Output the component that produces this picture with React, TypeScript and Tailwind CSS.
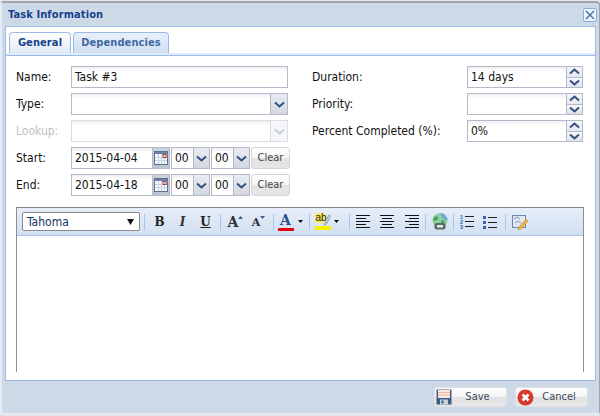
import type { ReactNode } from 'react';

const fieldBorder = 'border border-[#b5b8c8]';
const inputBg = 'bg-[linear-gradient(#f0f0f2,#ffffff_5px)]';
const btnBg = 'bg-[linear-gradient(#ffffff_0%,#f4f4f4_50%,#e2e2e2_50%,#e6e6e6_100%)]';

function Chevron({ up = false, muted = false }: { up?: boolean; muted?: boolean }) {
  return (
    <svg width="11" height="7" viewBox="0 0 11 7" className={up ? 'rotate-180' : ''}>
      <path d="M1 1.5 L5.5 5.5 L10 1.5" fill="none" stroke={muted ? '#c3cddc' : '#2f4f80'} strokeWidth="2" />
    </svg>
  );
}

function Input({ value = '', w, disabled = false, className = '' }: { value?: string; w: string; disabled?: boolean; className?: string }) {
  return (
    <div className={`${w} h-[22px] ${fieldBorder} ${inputBg} pl-[3px] flex items-center text-[12px] text-[#111] shrink-0 ${disabled ? 'border-[#dcdee6]' : ''} ${className}`}>
      {value}
    </div>
  );
}

function Arrow({ disabled = false, w = 'w-[17px]' }: { disabled?: boolean; w?: string }) {
  return (
    <div className={`${w} h-[22px] border-y border-r ${disabled ? 'border-[#dcdee6] bg-[#f5f6f8]' : 'border-[#b5b8c8] bg-[linear-gradient(#e8ecf3,#d3d8e0)]'} flex items-center justify-center shrink-0`}>
      <Chevron muted={disabled} />
    </div>
  );
}

function Combo({ w, value = '', disabled = false, arrowW }: { w: string; value?: string; disabled?: boolean; arrowW?: string }) {
  return (
    <div className="flex">
      <Input w={w} value={value} disabled={disabled} />
      <Arrow disabled={disabled} w={arrowW} />
    </div>
  );
}

function Spinner({ value = '' }: { value?: string }) {
  return (
    <div className="flex">
      <Input w="w-[100px]" value={value} />
      <div className="w-[16px] h-[22px] border-y border-r border-[#b5b8c8] flex flex-col shrink-0">
        <div className="flex-1 flex items-center justify-center bg-[linear-gradient(#f6f7fa,#e4e8ef)] border-b border-[#b5b8c8]"><Chevron up /></div>
        <div className="flex-1 flex items-center justify-center bg-[linear-gradient(#f6f7fa,#dfe3ea)]"><Chevron /></div>
      </div>
    </div>
  );
}

function CalendarIcon() {
  return (
    <svg width="14" height="14" viewBox="0 0 14 14">
      <rect x="0.5" y="0.5" width="13" height="13" fill="#f4f6fa" stroke="#5d7191" />
      <rect x="1" y="1" width="12" height="2" fill="#6d83a6" />
      <path d="M1 6.5H13M1 9.5H13M4.5 3V13M7.5 3V13M10.5 3V13" stroke="#c9d2e0" />
      <rect x="9" y="3.5" width="3" height="3" fill="none" stroke="#a8403f" />
    </svg>
  );
}

function DateTimeRow({ label, date }: { label: string; date: string }) {
  return (
    <div className="flex items-center h-[22px]">
      <span className="w-[55px] text-[12px] text-[#111]">{label}</span>
      <Input w="w-[82px]" value={date} />
      <div className="w-[17px] h-[22px] border-y border-r border-[#b5b8c8] bg-[linear-gradient(#c9d3e0,#bcc5d2)] flex items-center justify-center shrink-0">
        <CalendarIcon />
      </div>
      <div className="w-[1px]" />
      <Combo w="w-[23px]" value="00" arrowW="w-[16px]" />
      <div className="w-[1px]" />
      <Combo w="w-[23px]" value="00" arrowW="w-[16px]" />
      <div className="w-[1px]" />
      <div className={`w-[39px] h-[22px] border border-[#d5d5d5] rounded-[3px] ${btnBg} flex items-center justify-center text-[11px] text-[#444] shrink-0`}>
        Clear
      </div>
    </div>
  );
}

function Sep() {
  return <div className="w-[1px] h-[16px] bg-[#a8c6ec] mx-[3px] shrink-0" />;
}

function Tool({ w = 'w-[23px]', children }: { w?: string; children: ReactNode }) {
  return <div className={`${w} h-[20px] flex items-center justify-center shrink-0`}>{children}</div>;
}

function AlignIcon({ kind }: { kind: 'left' | 'center' | 'right' }) {
  const d = {
    left: 'M0 .5H14M0 3.5H10M0 6.5H14M0 9.5H10M0 12.5H14',
    center: 'M0 .5H14M2 3.5H12M0 6.5H14M2 9.5H12M0 12.5H14',
    right: 'M0 .5H14M4 3.5H14M0 6.5H14M4 9.5H14M0 12.5H14',
  }[kind];
  return (
    <svg width="14" height="13" viewBox="0 0 14 13">
      <path d={d} stroke="#111" />
    </svg>
  );
}

function Caret() {
  return (
    <svg width="5" height="3" viewBox="0 0 5 3" className="shrink-0">
      <path d="M0 0H5L2.5 3Z" fill="#111" />
    </svg>
  );
}

function Toolbar() {
  return (
    <div className="h-[28px] flex items-center pl-[5px] bg-[linear-gradient(#e6eef9,#d2e0f2)] border-b border-[#a9c5ea] font-['DejaVu_Serif',serif]">
      <div className="w-[118px] h-[19px] border border-[#8a8a8a] rounded-[2px] bg-white flex items-center justify-between pl-1 pr-[5px] text-[12px] text-[#15315f] font-['DejaVu_Sans_Condensed','DejaVu_Sans',sans-serif] shrink-0">
        Tahoma
        <svg width="7" height="6" viewBox="0 0 7 6"><path d="M0 0H7L3.5 6Z" fill="#111" /></svg>
      </div>
      <div className="w-[1px]" />
      <Sep />
      <Tool><span className="text-[12px] font-bold text-[#222]">B</span></Tool>
      <Tool><span className="text-[12px] italic font-bold text-[#333]">I</span></Tool>
      <Tool><span className="text-[12px] font-bold underline text-[#222]">U</span></Tool>
      <Sep />
      <Tool>
        <span className="text-[14px] font-bold text-[#333] leading-none">A</span>
        <svg width="5" height="3" viewBox="0 0 5 3" className="mb-[9px]"><path d="M0 3H5L2.5 0Z" fill="#3d5f93" /></svg>
      </Tool>
      <Tool>
        <span className="text-[11px] font-bold text-[#333] leading-none mt-[2px]">A</span>
        <svg width="5" height="3" viewBox="0 0 5 3" className="mb-[9px]"><path d="M0 0H5L2.5 3Z" fill="#3d5f93" /></svg>
      </Tool>
      <Sep />
      <div className="w-[17px] h-[20px] flex flex-col items-center shrink-0">
        <span className="text-[14px] font-bold text-[#2b4f8f] leading-[16px]">A</span>
        <div className="w-[16px] h-[3px] bg-[#e8000f]" />
      </div>
      <div className="w-[4px]" />
      <Caret />
      <div className="w-[3px]" />
      <Sep />
      <div className="w-[2px]" />
      <svg width="16" height="19" viewBox="0 0 16 19" className="shrink-0">
        <rect x="0" y="1" width="10" height="10" fill="#f5ee5b" />
        <text x="0.5" y="9" fontSize="10" fontFamily="Liberation Sans" fill="#222">ab</text>
        <path d="M10 11L14 3L15.5 4L11.5 12L9.5 13Z" fill="#dfe6f0" stroke="#6b7c94" strokeWidth="0.7" />
        <rect x="0" y="14" width="16" height="4" fill="#f7f000" />
      </svg>
      <div className="w-[3px]" />
      <Caret />
      <div className="w-[7px]" />
      <Sep />
      <Tool w="w-[20px]"><AlignIcon kind="left" /></Tool>
      <Tool w="w-[28px]"><AlignIcon kind="center" /></Tool>
      <Tool w="w-[21px]"><AlignIcon kind="right" /></Tool>
      <Sep />
      <Tool w="w-[21px]">
        <svg width="16" height="17" viewBox="0 0 16 17">
          <circle cx="8" cy="7.5" r="7.5" fill="#8fd0a0" />
          <path d="M8 0A7.5 7.5 0 0 1 15.5 7.5L11 6L9 2Z" fill="#6fa8d8" />
          <path d="M2 4C5 2 7 4 6 6S2 8 1 7ZM9 7L13 8L12 10H9Z" fill="#4ea266" />
          <rect x="2.5" y="10" width="11" height="6.5" rx="2" fill="#5f6868" />
          <rect x="5" y="12" width="6" height="2.5" fill="#e6eaea" />
        </svg>
      </Tool>
      <Sep />
      <Tool w="w-[20px]">
        <svg width="14" height="15" viewBox="0 0 14 15">
          <text x="0" y="5" fontSize="5.5" fontFamily="Liberation Sans" fontWeight="700" fill="#2b62ad">1</text>
          <text x="0" y="10" fontSize="5.5" fontFamily="Liberation Sans" fontWeight="700" fill="#2b62ad">2</text>
          <text x="0" y="15" fontSize="5.5" fontFamily="Liberation Sans" fontWeight="700" fill="#2b62ad">3</text>
          <path d="M5 2.5H14M5 7.5H14M5 12.5H14" stroke="#222" />
        </svg>
      </Tool>
      <Tool w="w-[25px]">
        <svg width="14" height="14" viewBox="0 0 14 14">
          <rect x="0" y="1" width="3" height="3" fill="#3a64a0" />
          <rect x="0" y="6" width="3" height="3" fill="#3a64a0" />
          <rect x="0" y="11" width="3" height="3" fill="#3a64a0" />
          <path d="M5 2.5H14M5 7.5H14M5 12.5H14" stroke="#222" />
        </svg>
      </Tool>
      <Sep />
      <Tool w="w-[22px]">
        <svg width="16" height="16" viewBox="0 0 16 16">
          <rect x="0.5" y="1.5" width="13" height="12" fill="#dfe8f5" stroke="#6f87ab" />
          <path d="M2 5L5 3L8 5M3 9L6 7L9 9" stroke="#7f95b8" fill="none" />
          <path d="M7 13L14 5L16 7L9 15L6 15.5Z" fill="#f0b34a" stroke="#c98625" strokeWidth="0.6" />
        </svg>
      </Tool>
    </div>
  );
}

function FooterButton({ icon, label }: { icon: ReactNode; label: string }) {
  return (
    <div className={`w-[73px] h-[20px] border border-[#e0e0e0] rounded-[3px] ${btnBg} flex items-center text-[11px] text-[#3d4a5c]`}>
      {icon}
      <span className="flex-1 text-center pr-[3px]">{label}</span>
    </div>
  );
}

export default function App() {
  return (
    <div className="w-[600px] h-[416px] bg-[#dfe3e8] font-['DejaVu_Sans_Condensed','DejaVu_Sans',sans-serif] overflow-hidden flex flex-col">
      {/* strip of the page behind the dialog */}
      <div className="h-[1px] bg-[#e8e8e8] shrink-0" />
      <div className="h-[414px] shrink-0 flex flex-col bg-[#cdd9e7] border-t-2 border-r border-t-[#9ea5ae] border-r-[#9ea5ae] border-l-2 border-b-2 border-l-[#e4ecf6] border-b-[#e4ecf6] rounded-[4px] pl-[3px] pr-[3px]">
        {/* title bar */}
        <div className="h-[23px] pt-[1px] flex items-center justify-between shrink-0">
          <span className="text-[11px] tracking-[0.1px] font-bold text-[#15428b] pl-[3px]">Task Information</span>
          <div className="w-[14px] h-[14px] mr-[-1px] border border-[#8aaedb] rounded-[2px] bg-[#eef4fc] flex items-center justify-center">
            <svg width="10" height="10" viewBox="0 0 10 10"><path d="M1 1L9 9M9 1L1 9" stroke="#3f6aa3" strokeWidth="1.3" /></svg>
          </div>
        </div>

        <div className="h-[355px] bg-white border border-[#99bbe8] flex flex-col shrink-0">
          {/* tabs */}
          <div className="h-[29px] shrink-0 flex items-end gap-[2px] pl-[3px] border-b border-[#99bbe8] pb-[2px] relative">
            <div className="w-[62px] h-[21px] rounded-t-[4px] border border-b-0 border-[#99bbe8] bg-[linear-gradient(#ffffff,#dfe9f6)] flex items-center justify-center text-[11px] tracking-[0.1px] font-bold text-[#15428b]">
              General
            </div>
            <div className="w-[96px] h-[21px] rounded-t-[4px] border border-b-0 border-[#99bbe8] bg-[linear-gradient(#e9f0fa,#d0def0)] flex items-center justify-center text-[11px] tracking-[0.1px] font-bold text-[#416aa3]">
              Dependencies
            </div>
            <div className="absolute left-0 right-0 bottom-0 h-[2px] bg-[#deecfd]" />
          </div>

          {/* form */}
          <div className="pl-[10px] pt-[10px] flex flex-col flex-1 min-h-0">
            <div className="flex">
              <div className="w-[296px] flex flex-col gap-[5px]">
                <div className="flex items-center">
                  <span className="w-[55px] text-[12px] text-[#111]">Name:</span>
                  <Input w="w-[217px]" value="Task #3" />
                </div>
                <div className="flex items-center">
                  <span className="w-[55px] text-[12px] text-[#111]">Type:</span>
                  <Combo w="w-[200px]" />
                </div>
                <div className="flex items-center">
                  <span className="w-[55px] text-[12px] text-[#c0c0c0]">Lookup:</span>
                  <Combo w="w-[200px]" disabled />
                </div>
                <DateTimeRow label="Start:" date="2015-04-04" />
                <DateTimeRow label="End:" date="2015-04-18" />
              </div>
              <div className="flex flex-col gap-[5px]">
                {[['Duration:', '14 days'], ['Priority:', ''], ['Percent Completed (%):', '0%']].map(([label, value]) => (
                  <div key={label} className="flex items-center">
                    <span className="w-[155px] text-[12px] text-[#111]">{label}</span>
                    <Spinner value={value} />
                  </div>
                ))}
              </div>
            </div>

            {/* editor */}
            <div className="mt-[11px] w-[568px] h-[165px] border-x border-t border-[#8a8a8a] border-x-[#8f8f8f] flex flex-col">
              <Toolbar />
              <div className="flex-1 bg-white" />
            </div>
          </div>
        </div>

        {/* footer */}
        <div className="flex-1 flex justify-end items-start gap-[8px] pt-[6px] pr-[8px]">
          <FooterButton
            label="Save"
            icon={
              <svg width="16" height="16" viewBox="0 0 16 16" className="ml-[1px] shrink-0">
                <rect x="0.5" y="0.5" width="15" height="15" fill="#3b5f82" />
                <rect x="2" y="1" width="12" height="8" fill="#f8e9e2" />
                <path d="M2 3.5H14M2 6H14" stroke="#eeb5a5" />
                <rect x="4" y="10.5" width="8" height="5" fill="#c8d2dc" />
                <rect x="5.5" y="11.5" width="2" height="3" fill="#3b5f82" />
              </svg>
            }
          />
          <FooterButton
            label="Cancel"
            icon={
              <svg width="17" height="17" viewBox="0 0 17 17" className="ml-[1px] shrink-0">
                <circle cx="8.5" cy="8.5" r="8" fill="#d8392b" />
                <path d="M5.5 5.5L11.5 11.5M11.5 5.5L5.5 11.5" stroke="#fff" strokeWidth="2.6" />
              </svg>
            }
          />
        </div>
      </div>
    </div>
  );
}
